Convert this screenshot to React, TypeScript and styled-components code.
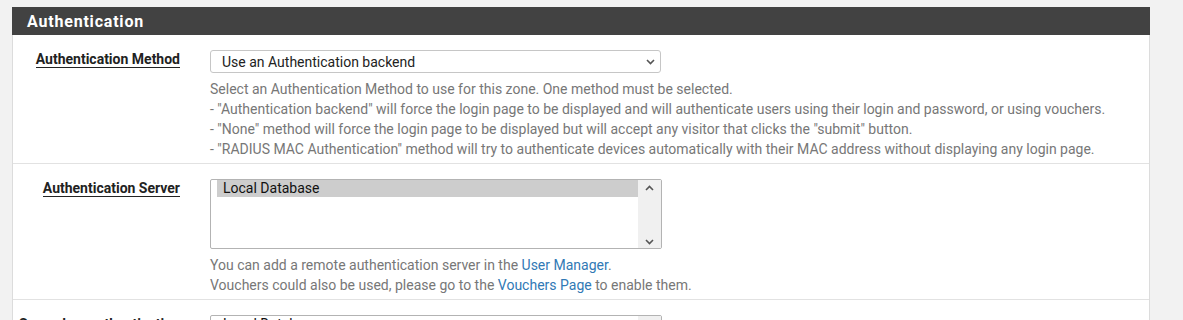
import styled, { createGlobalStyle } from 'styled-components'

const GlobalStyle = createGlobalStyle`
  html, body {
    margin: 0;
    padding: 0;
    background: #f2f2f2;
    font-family: Roboto, "Liberation Sans", Arial, sans-serif;
    font-size: 14px;
    color: #333;
  }
`

const Page = styled.div`
  padding: 7px 0 0 12px;
  width: 1138px;
`

const Panel = styled.section`
  background: #fff;
  border: 1px solid #dcdcdc;
  border-top: none;
`

const PanelHeading = styled.h2`
  margin: 0 -1px;
  height: 28px;
  display: flex;
  align-items: center;
  padding: 0 15px;
  background: #424242;
  color: #fff;
  font-size: 16px;
  font-weight: 700;
  letter-spacing: 0.8px;
`

const Row = styled.div`
  display: grid;
  grid-template-columns: 167px 1fr;
  column-gap: 30px;
  padding: 15px 0 4px;
  border-bottom: 1px solid #e2e2e2;

  &:last-child { border-bottom: none; }
`

const LabelCell = styled.div`
  text-align: right;
  padding-top: 1px;
`

const Label = styled.span`
  font-weight: 700;
  font-size: 14px;
  line-height: 17px;
  color: #222;
  border-bottom: 1px solid #222;
`

const Field = styled.div`
  min-width: 0;
`

const Select = styled.div`
  width: 451px;
  height: 23px;
  box-sizing: border-box;
  border: 1px solid #c6c6c6;
  border-radius: 3px;
  background: #fff;
  display: flex;
  align-items: center;
  justify-content: space-between;
  padding: 0 5px 0 11px;
  color: #222;
`

const ListBox = styled.div<{ $height: number }>`
  width: 452px;
  height: ${(p) => p.$height}px;
  box-sizing: border-box;
  border: 1px solid #b3b3b3;
  border-radius: 2px;
  background: #fff;
  display: flex;
`

const Options = styled.div`
  flex: 1;
  padding: 0 0 0 6px;
`

const Option = styled.div<{ $selected?: boolean }>`
  height: 17px;
  line-height: 17px;
  padding-left: 6px;
  color: #111;
  background: ${(p) => (p.$selected ? '#cdcdcd' : 'transparent')};
`

const ScrollTrack = styled.div`
  width: 23px;
  background: #f0f0f0;
  display: flex;
  flex-direction: column;
  justify-content: space-between;
  align-items: center;
  padding: 5px 0 3px;
`

const Help = styled.div`
  margin-top: 6px;
  color: #777;
  line-height: 20px;
  white-space: nowrap;
`

const Link = styled.a`
  color: #3179b5;
  text-decoration: none;
`

const Chevron = ({ up = false }: { up?: boolean }) => (
  <svg width="9" height="6" viewBox="0 0 9 6">
    <path
      d={up ? 'M1 5 L4.5 1.5 L8 5' : 'M1 1 L4.5 4.5 L8 1'}
      fill="none"
      stroke="#555"
      strokeWidth="1.6"
    />
  </svg>
)

export default function App() {
  return (
    <>
      <GlobalStyle />
      <Page>
        <Panel>
          <PanelHeading>Authentication</PanelHeading>

          <Row>
            <LabelCell>
              <Label>Authentication Method</Label>
            </LabelCell>
            <Field>
              <Select>
                <span>Use an Authentication backend</span>
                <Chevron />
              </Select>
              <Help>
                Select an Authentication Method to use for this zone. One method must be selected.
                <br />- "Authentication backend" will force the login page to be displayed and will authenticate users using their login and password, or using vouchers.
                <br />- "None" method will force the login page to be displayed but will accept any visitor that clicks the "submit" button.
                <br />- "RADIUS MAC Authentication" method will try to authenticate devices automatically with their MAC address without displaying any login page.
              </Help>
            </Field>
          </Row>

          <Row>
            <LabelCell>
              <Label>Authentication Server</Label>
            </LabelCell>
            <Field>
              <ListBox $height={70}>
                <Options>
                  <Option $selected>Local Database</Option>
                </Options>
                <ScrollTrack>
                  <Chevron up />
                  <Chevron />
                </ScrollTrack>
              </ListBox>
              <Help>
                You can add a remote authentication server in the <Link href="#">User Manager</Link>.
                <br />Vouchers could also be used, please go to the <Link href="#">Vouchers Page</Link> to enable them.
              </Help>
            </Field>
          </Row>

          <Row>
            <LabelCell>
              <Label>Secondary authentication Server</Label>
            </LabelCell>
            <Field>
              <ListBox $height={70}>
                <Options>
                  <Option>Local Database</Option>
                </Options>
                <ScrollTrack>
                  <Chevron up />
                  <Chevron />
                </ScrollTrack>
              </ListBox>
            </Field>
          </Row>
        </Panel>
      </Page>
    </>
  )
}
